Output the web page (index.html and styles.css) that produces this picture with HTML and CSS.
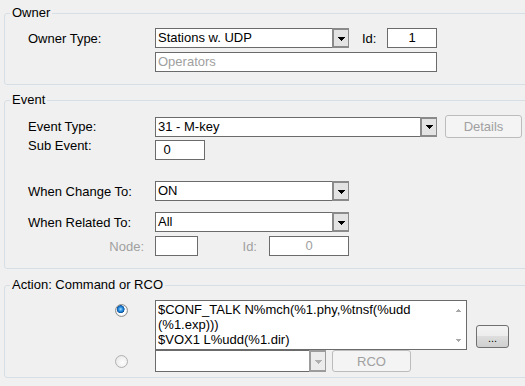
FILE: index.html
```html
<!DOCTYPE html>
<html lang="en">
<head>
    <meta charset="UTF-8">
    <title>Event Action</title>
    <link rel="stylesheet" href="styles.css">
</head>
<body>

<div class="dialog">

    <fieldset class="group group-owner">
        <legend>Owner</legend>
        <div class="rows rows-owner">
            <div class="row">
                <span class="label">Owner Type:</span>
                <div class="combo combo-short">
                    <span class="value">Stations w. UDP</span>
                    <span class="drop"><svg width="7" height="4" viewBox="0 0 7 4"><path d="M0 0h7v1H0zM1 1h5v1H1zM2 2h3v1H2zM3 3h1v1H3z"/></svg></span>
                </div>
                <span class="inline-label">Id:</span>
                <div class="field field-id centered">1</div>
            </div>
            <div class="row">
                <span class="label"></span>
                <div class="field field-wide muted">Operators</div>
            </div>
        </div>
    </fieldset>

    <fieldset class="group group-event">
        <legend>Event</legend>
        <div class="rows">
            <div class="row row-type">
                <span class="label">Event Type:</span>
                <div class="combo combo-wide">
                    <span class="value">31 - M-key</span>
                    <span class="drop"><svg width="7" height="4" viewBox="0 0 7 4"><path d="M0 0h7v1H0zM1 1h5v1H1zM2 2h3v1H2zM3 3h1v1H3z"/></svg></span>
                </div>
                <button class="btn btn-details" disabled>Details</button>
            </div>
            <div class="row row-sub">
                <span class="label label-raised">Sub Event:</span>
                <div class="field field-sub">&nbsp;0</div>
            </div>
            <div class="row row-change">
                <span class="label">When Change To:</span>
                <div class="combo combo-short">
                    <span class="value">ON</span>
                    <span class="drop"><svg width="7" height="4" viewBox="0 0 7 4"><path d="M0 0h7v1H0zM1 1h5v1H1zM2 2h3v1H2zM3 3h1v1H3z"/></svg></span>
                </div>
            </div>
            <div class="row row-related">
                <span class="label">When Related To:</span>
                <div class="combo combo-short">
                    <span class="value">All</span>
                    <span class="drop"><svg width="7" height="4" viewBox="0 0 7 4"><path d="M0 0h7v1H0zM1 1h5v1H1zM2 2h3v1H2zM3 3h1v1H3z"/></svg></span>
                </div>
            </div>
            <div class="row row-node">
                <span class="label label-right muted">Node:</span>
                <div class="field field-node"></div>
                <span class="inline-label-right muted">Id:</span>
                <div class="field field-node-id centered muted">0</div>
            </div>
        </div>
    </fieldset>

    <fieldset class="group group-action">
        <legend>Action: Command or RCO</legend>
        <div class="rows">
            <div class="row row-command">
                <span class="radio-cell"><span class="radio checked"></span></span>
                <div class="memo">
                    <div class="memo-text">$CONF_TALK N%mch(%1.phy,%tnsf(%udd
(%1.exp)))
$VOX1 L%udd(%1.dir)</div>
                    <div class="memo-scroll">
                        <svg width="5" height="3" viewBox="0 0 5 3"><path d="M2 0h1v1H2zM1 1h3v1H1zM0 2h5v1H0z"/></svg>
                        <svg width="5" height="3" viewBox="0 0 5 3"><path d="M0 0h5v1H0zM1 1h3v1H1zM2 2h1v1H2z"/></svg>
                    </div>
                </div>
                <button class="btn btn-more">...</button>
            </div>
            <div class="row row-rco">
                <span class="radio-cell"><span class="radio"></span></span>
                <div class="combo combo-rco">
                    <span class="value"></span>
                    <span class="drop drop-disabled"><svg width="7" height="4" viewBox="0 0 7 4"><path d="M0 0h7v1H0zM1 1h5v1H1zM2 2h3v1H2zM3 3h1v1H3z"/></svg></span>
                </div>
                <button class="btn btn-rco" disabled>RCO</button>
            </div>
        </div>
    </fieldset>

</div>

</body>
</html>
```

FILE: styles.css
```css
:root {
    --background-color: #f0f0f0;
    --group-border-color: #d5dfe5;
    --field-border-color: #6b6b6b;
    --muted-text-color: #a0a0a0;
    --disabled-border-color: #bcbcbc;
}

html, body {
    margin: 0;
    height: 100%;
    overflow: hidden;
    background-color: var(--background-color);
    font-family: "Liberation Sans", Arial, sans-serif;
    font-size: 13px;
    color: #000;
}

/* The group boxes run past the right edge of the window, so clip them here */
.dialog {
    width: 521px;
    padding: 6px 0 0 4px;
    overflow: hidden;
}

/* --- Group boxes --- */
.group {
    width: 530px;
    min-width: 0;
    box-sizing: border-box;
    margin: 0;
    padding: 8px 0 12px 5px;
    border: 1px solid var(--group-border-color);
    border-radius: 3px;
}

.group legend {
    padding: 0 2px;
    line-height: 14px;
}

.group-event {
    margin-top: 8px;
}

.group-action {
    margin-top: 9px;
    padding-bottom: 5px;
}

/* --- Rows --- */
.rows {
    display: flex;
    flex-direction: column;
    margin-left: 18px;
}

.row {
    display: flex;
    align-items: center;
}

.rows-owner {
    gap: 4px;
}

.label {
    flex: none;
    width: 127px;
    line-height: 15px;
    white-space: nowrap;
}

.label-raised {
    align-self: flex-start;
    margin-top: -2px;
}

.label-right {
    text-align: right;
    padding-right: 11px;
    box-sizing: border-box;
}

.muted {
    color: var(--muted-text-color);
}

.inline-label {
    flex: none;
    width: 38px;
    padding-left: 13px;
    box-sizing: border-box;
}

.inline-label-right {
    flex: none;
    width: 71px;
    padding-right: 12px;
    text-align: right;
    box-sizing: border-box;
}

.row-type {
    height: 23px;
}

.row-sub {
    margin-top: 2px;
}

.row-change {
    margin-top: 21px;
}

.row-related {
    margin-top: 11px;
}

.row-node {
    margin-top: 4px;
}

/* --- Text fields --- */
.field,
.combo {
    flex: none;
    height: 20px;
    box-sizing: border-box;
    border: 1px solid var(--field-border-color);
    background-color: #fff;
    line-height: 18px;
}

.field {
    padding: 0 2px;
    white-space: nowrap;
}

.centered {
    text-align: center;
}

.field-id { width: 50px; }
.field-wide { width: 282px; }
.field-sub { width: 50px; padding-left: 4px; }
.field-node { width: 43px; }
.field-node-id { width: 80px; }

/* --- Combo boxes --- */
.combo {
    display: flex;
}

.combo .value {
    flex: 1;
    padding-left: 2px;
    white-space: nowrap;
    overflow: hidden;
}

.combo .drop {
    flex: none;
    width: 17px;
    box-sizing: border-box;
    border: 2px solid #8a8a8a;
    border-right-width: 1px;
    margin: -1px -1px -1px 0;
    height: 20px;
    background-color: #e3e3e3;
    display: flex;
    align-items: center;
    justify-content: center;
}

.combo .drop svg {
    fill: #000;
    margin-top: 1px;
}

.combo .drop-disabled {
    border-color: #9c9c9c;
    background-color: #ececec;
}

.combo .drop-disabled svg {
    fill: #b0b0b0;
}

.combo-short { width: 194px; }
.combo-wide { width: 282px; }
.combo-rco { width: 171px; height: 22px; }
.combo-rco .drop { height: 22px; }

/* --- Buttons --- */
.btn {
    flex: none;
    box-sizing: border-box;
    margin: 0;
    padding: 0;
    font: inherit;
    border-radius: 3px;
}

.btn[disabled] {
    border: 1px solid var(--disabled-border-color);
    background-color: #f4f4f4;
    color: var(--muted-text-color);
}

.btn-details {
    width: 77px;
    height: 23px;
    margin-left: 8px;
}

.btn-more {
    width: 33px;
    height: 23px;
    margin-left: 9px;
    align-self: flex-end;
    margin-bottom: 2px;
    border: 1px solid #707070;
    background: linear-gradient(#f3f3f3, #ececec 50%, #dddddd 50%, #cfcfcf);
    color: #000;
    font-size: 11px;
    line-height: 21px;
    padding-top: 2px;
}

.btn-rco {
    width: 79px;
    height: 22px;
    margin-left: 6px;
}

/* --- Command memo --- */
.row-command {
    align-items: flex-start;
}

.memo {
    flex: none;
    display: flex;
    width: 312px;
    height: 50px;
    box-sizing: border-box;
    border: 1px solid var(--field-border-color);
    background-color: #fff;
}

.memo-text {
    flex: 1;
    padding: 1px 2px;
    line-height: 15px;
    white-space: pre;
    overflow: hidden;
}

.memo-scroll {
    flex: none;
    width: 16px;
    display: flex;
    flex-direction: column;
    justify-content: space-between;
    align-items: center;
    padding: 8px 0 7px;
}

.memo-scroll svg {
    fill: #a8a8a8;
}

/* --- Radio buttons --- */
.radio-cell {
    flex: none;
    width: 127px;
    display: flex;
}

.radio {
    width: 13px;
    height: 13px;
    margin-left: 87px;
    box-sizing: border-box;
    border: 1px solid #b0b0b0;
    border-radius: 50%;
    background: radial-gradient(circle at 60% 60%, #ffffff, #e2e2e2);
}

.row-command .radio {
    margin-top: 4px;
}

.radio.checked {
    border-color: #8e8f8f;
    background:
        radial-gradient(circle at 42% 38%, #b6e2ff 0, #3c9ee8 1.6px, #1470c6 3px, #0c4f94 3.7px, transparent 4.2px),
        radial-gradient(circle, #ffffff 4px, #dcdcdc 6px);
}
```
